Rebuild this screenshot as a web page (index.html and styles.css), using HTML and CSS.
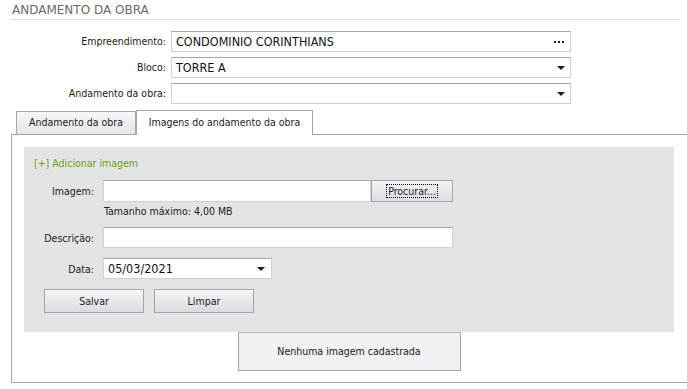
FILE: index.html
```html
<!DOCTYPE html>
<html lang="pt-BR">
<head>
  <meta charset="UTF-8" />
  <title>Andamento da obra</title>
  <link rel="stylesheet" href="styles.css">
</head>
<body>
  <div class="page">
    <header class="title-bar">
      <h1>ANDAMENTO DA OBRA</h1>
    </header>

    <div class="filters">
      <label>Empreendimento:</label>
      <div class="field">
        <span class="value">CONDOMINIO CORINTHIANS</span>
        <svg class="dots" width="11" height="3" viewBox="0 0 11 3"><rect x="0" y="0" width="2" height="2"/><rect x="4" y="0" width="2" height="2"/><rect x="8" y="0" width="2" height="2"/></svg>
      </div>

      <label>Bloco:</label>
      <div class="field">
        <span class="value">TORRE A</span>
        <span class="arrow"></span>
      </div>

      <label>Andamento da obra:</label>
      <div class="field">
        <span class="value"></span>
        <span class="arrow"></span>
      </div>
    </div>

    <div class="tabs">
      <div class="tab">Andamento da obra</div>
      <div class="tab active">Imagens do andamento da obra</div>
    </div>

    <div class="panel">
      <div class="upload">
        <a class="add-link">[+] Adicionar imagem</a>

        <div class="row first">
          <label>Imagem:</label>
          <div class="file">
            <div class="field file-input"></div>
            <button class="browse"><span>Procurar...</span></button>
          </div>
        </div>
        <div class="hint">Tamanho máximo: 4,00 MB</div>

        <div class="row desc">
          <label>Descrição:</label>
          <div class="field desc-input"></div>
        </div>

        <div class="row date">
          <label>Data:</label>
          <div class="field date-input">
            <span class="value">05/03/2021</span>
            <span class="arrow"></span>
          </div>
        </div>

        <div class="actions">
          <button class="btn">Salvar</button>
          <button class="btn">Limpar</button>
        </div>
      </div>

      <div class="empty">Nenhuma imagem cadastrada</div>
    </div>
  </div>
</body>
</html>
```

FILE: styles.css
```css
body {
  margin: 0;
  padding: 0;
  background: #ffffff;
  font-family: "DejaVu Sans Condensed", "DejaVu Sans", sans-serif;
  font-stretch: condensed;
  font-size: 10.5px;
  color: #1a1a1a;
}

.page {
  padding-left: 11px;
}

/* Title */
.title-bar {
  margin-right: 7px;
  padding: 3px 0 2px 1px;
  border-bottom: 1px solid #dcdcdc;
}

.title-bar h1 {
  margin: 0;
  font-family: "DejaVu Sans", sans-serif;
  font-stretch: normal;
  font-size: 12px;
  font-weight: normal;
  line-height: 14px;
  color: #6a6a6a;
}

/* Top filters */
.filters {
  display: grid;
  grid-template-columns: 155px 400px;
  column-gap: 5px;
  row-gap: 5px;
  margin-top: 11px;
}

.filters label {
  text-align: right;
  line-height: 21px;
}

.field {
  box-sizing: border-box;
  height: 21px;
  display: flex;
  align-items: center;
  justify-content: space-between;
  padding: 0 5px 0 4px;
  background: #ffffff;
  border: 1px solid #cfcfd4;
  border-top-color: #a4a4ac;
  font-size: 12.5px;
  color: #111111;
}

.dots {
  fill: #1c1c2a;
  margin-top: 1px;
}

.arrow {
  width: 0;
  height: 0;
  border-left: 4px solid transparent;
  border-right: 4px solid transparent;
  border-top: 4px solid #1c1c2a;
  margin-top: 1px;
}

/* Tabs */
.tabs {
  display: flex;
  align-items: flex-end;
  margin-top: 6px;
  margin-left: 5px;
  height: 24px;
}

.tab {
  box-sizing: border-box;
  width: 120px;
  height: 23px;
  border: 1px solid #a4a4ac;
  border-bottom: none;
  background: linear-gradient(#f6f6f8, #e6e6ea);
  text-align: center;
  line-height: 21px;
}

.tab.active {
  width: 177px;
  height: 25px;
  margin-bottom: -1px;
  background: #ffffff;
  line-height: 23px;
  position: relative;
}

/* Panel */
.panel {
  border: 1px solid #a4a4ac;
  border-right: none;
  padding: 12px 13px 11px 12px;
}

.upload {
  background: #e3e3e3;
  height: 185px;
  box-sizing: border-box;
  padding: 9px 0 0 10px;
}

.add-link {
  display: block;
  color: #6f9a1e;
  line-height: 14px;
  font-size: 10.5px;
}

.row {
  display: grid;
  grid-template-columns: 60px auto;
  column-gap: 9px;
  align-items: center;
}

.row label {
  text-align: right;
}

.row.first {
  margin-top: 10px;
}

.row.desc {
  margin-top: 9px;
}

.row.date {
  margin-top: 10px;
}

.file {
  display: flex;
}

.file-input {
  width: 268px;
  height: 22px;
}

.browse {
  box-sizing: border-box;
  width: 82px;
  height: 22px;
  padding: 0;
  border: 1px solid #a4a4ac;
  background: linear-gradient(#f4f4f6, #dcdce2);
  font: inherit;
  color: #1a1a1a;
}

.browse span {
  outline: 1px dotted #000000;
  padding: 0 1px;
}

.hint {
  margin: 2px 0 0 70px;
  line-height: 14px;
}

.desc-input {
  width: 350px;
}

.date-input {
  width: 169px;
  height: 21px;
  padding-right: 6px;
}

.actions {
  display: flex;
  gap: 10px;
  margin: 10px 0 0 10px;
}

.btn {
  box-sizing: border-box;
  width: 100px;
  height: 24px;
  padding: 0;
  border: 1px solid #a4a4ac;
  background: linear-gradient(#f6f6f8, #dadae0);
  font: inherit;
  color: #1a1a1a;
}

.empty {
  box-sizing: border-box;
  width: 223px;
  height: 39px;
  margin: 0 auto;
  border: 1px solid #a4a4ac;
  border-top-color: #b4b4bc;
  background: #f0f0f5;
  text-align: center;
  line-height: 37px;
}
```
